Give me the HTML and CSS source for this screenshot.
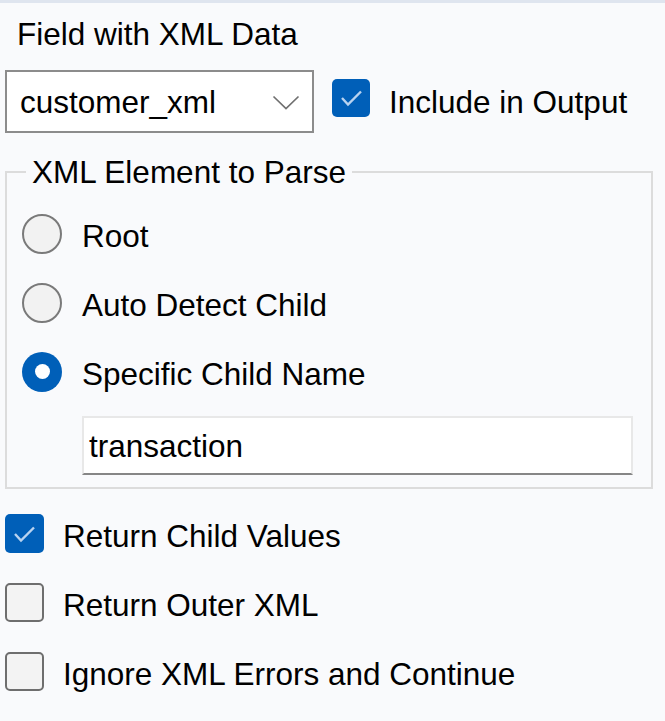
FILE: index.html
```html
<!DOCTYPE html>
<html lang="en">
<head>
<meta charset="utf-8">
<title>XML Parse</title>
<link rel="stylesheet" href="styles.css">
</head>
<body>
<div class="top-rule"></div>
<div class="panel">
  <div class="field-label">Field with XML Data</div>
  <div class="field-row">
    <div class="combo">
      <span class="combo-text">customer_xml</span>
      <svg class="chevron" width="28" height="16" viewBox="0 0 28 16"><path d="M1.5 1.5 L14 13.5 L26.5 1.5" fill="none" stroke="#707070" stroke-width="1.7"/></svg>
    </div>
    <span class="check checked top-check"><svg width="38" height="38" viewBox="0 0 38 38"><path d="M10 19 L16 25.5 L29 12.5" fill="none" stroke="#b9d3f0" stroke-width="2.4"/></svg></span>
    <span class="include">Include in Output</span>
  </div>

  <fieldset class="group">
    <legend class="group-title">XML Element to Parse</legend>
    <div class="opt-row">
      <span class="radio"></span>
      <span class="label">Root</span>
    </div>
    <div class="opt-row">
      <span class="radio"></span>
      <span class="label">Auto Detect Child</span>
    </div>
    <div class="opt-row">
      <span class="radio selected"><span class="dot"></span></span>
      <span class="label">Specific Child Name</span>
    </div>
    <div class="textbox">transaction</div>
  </fieldset>

  <div class="opts">
    <div class="opt-row cb-row">
      <span class="check checked"><svg width="39" height="39" viewBox="0 0 39 39"><path d="M10 20 L16 26.5 L29 13.5" fill="none" stroke="#b9d3f0" stroke-width="2.4"/></svg></span>
      <span class="label">Return Child Values</span>
    </div>
    <div class="opt-row cb-row">
      <span class="check"></span>
      <span class="label">Return Outer XML</span>
    </div>
    <div class="opt-row cb-row">
      <span class="check"></span>
      <span class="label">Ignore XML Errors and Continue</span>
    </div>
  </div>
</div>
</body>
</html>
```
FILE: styles.css
```css
html, body {
  margin: 0;
  padding: 0;
}
body {
  background: #f9fafc;
  font-family: "Liberation Sans", Arial, sans-serif;
  font-size: 31.5px;
  line-height: 36px;
  color: #000;
  width: 665px;
  height: 721px;
  overflow: hidden;
}
.top-rule {
  height: 3px;
  background: #dfe5ef;
}
.panel {
  padding-left: 5px;
}
.field-label {
  margin-top: 13px;
  padding-left: 12px;
}
.field-row {
  margin-top: 18px;
  display: flex;
  align-items: center;
}
.combo {
  box-sizing: border-box;
  width: 309px;
  height: 63px;
  border: 2px solid #8c8c8c;
  background: #fff;
  display: flex;
  align-items: center;
  justify-content: space-between;
  padding-left: 13px;
  padding-right: 12px;
}
.chevron {
  display: block;
  margin-top: 2px;
}
.check {
  box-sizing: border-box;
  width: 39px;
  height: 39px;
  border-radius: 5px;
  border: 2px solid #6e6e6e;
  background: #f3f3f3;
  flex: none;
  display: flex;
}
.check.checked {
  border: none;
  background: #005fb8;
}
.check svg {
  display: block;
}
.top-check {
  width: 38px;
  height: 38px;
  margin-left: 18px;
  margin-bottom: 7px;
}
.include {
  margin-left: 19px;
}
.group {
  box-sizing: border-box;
  width: 648px;
  margin: 21px 0 0 0;
  padding: 24px 0 12px 15px;
  border: 2px solid #dcdcdc;
  min-width: 0;
}
.group-title {
  margin-left: 4px;
  padding: 0 6px;
}
.opt-row {
  display: flex;
  align-items: center;
  height: 39px;
}
.opt-row + .opt-row {
  margin-top: 30px;
}
.label {
  padding-top: 5px;
}
.radio {
  box-sizing: border-box;
  width: 40px;
  height: 40px;
  border-radius: 50%;
  border: 2px solid #7a7a7a;
  background: #f2f2f2;
  margin-right: 20px;
  flex: none;
  display: flex;
  align-items: center;
  justify-content: center;
}
.radio.selected {
  border: none;
  background: #005fb8;
}
.dot {
  width: 15px;
  height: 15px;
  border-radius: 50%;
  background: #fff;
}
.textbox {
  box-sizing: border-box;
  margin-top: 25px;
  margin-left: 60px;
  width: 551px;
  height: 59px;
  background: #fff;
  border: 2px solid #e8e8e8;
  border-bottom-color: #868686;
  padding-left: 5px;
  display: flex;
  align-items: center;
}
.opts {
  margin-top: 25px;
}
.cb-row .check {
  margin-right: 19px;
}
```
